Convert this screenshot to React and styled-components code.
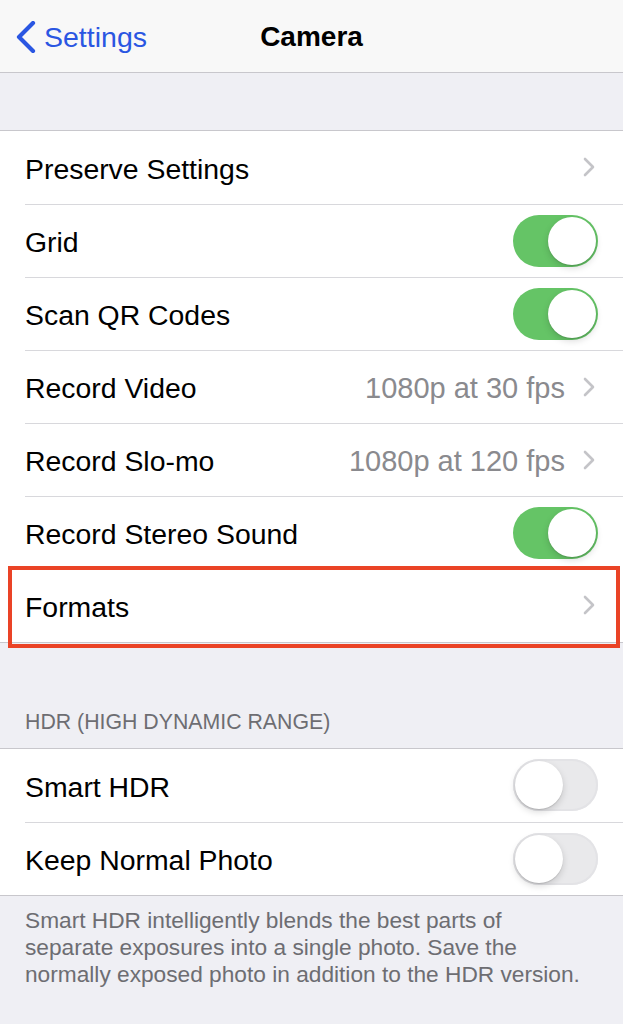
import React from "react";
import styled, { createGlobalStyle } from "styled-components";

const GlobalStyle = createGlobalStyle`
  html, body {
    margin: 0;
    padding: 0;
    background: #efeff4;
  }
  body {
    font-family: "Liberation Sans", Arial, sans-serif;
    -webkit-font-smoothing: antialiased;
  }
`;

const Page = styled.div`
  width: 623px;
  min-height: 1024px;
  background: #efeff4;
  overflow: hidden;
`;

const NavBar = styled.div`
  height: 73px;
  box-sizing: border-box;
  background: #f8f8f8;
  border-bottom: 1px solid #c8c7cc;
  display: grid;
  grid-template-columns: 1fr auto 1fr;
  align-items: center;
  padding-top: 2px;
`;

const BackButton = styled.div`
  display: flex;
  align-items: center;
  gap: 8px;
  padding-left: 15px;
  color: #2a56e2;
  font-size: 28.5px;
`;

const Title = styled.div`
  font-size: 28px;
  font-weight: 700;
  color: #000;
`;

const Spacer = styled.div`
  height: ${(p) => p.h}px;
`;

const SectionHeader = styled.div`
  height: 105px;
  box-sizing: border-box;
  display: flex;
  align-items: flex-end;
  padding: 0 25px 13px;
  font-size: 21.3px;
  color: #6d6d72;
`;

const Group = styled.div`
  background: #fff;
  border-top: 1px solid #c8c7cc;
  border-bottom: 1px solid #c8c7cc;
`;

const Row = styled.div`
  position: relative;
  height: 73px;
  display: flex;
  align-items: center;
  padding-left: 25px;

  & + & > div:first-child {
    border-top: 1px solid #d8d8dc;
  }

  ${(p) =>
    p.highlight &&
    `
    &::after {
      content: "";
      position: absolute;
      top: -3px;
      bottom: -6px;
      left: 8px;
      right: 3px;
      border: 4px solid #ea4326;
      pointer-events: none;
      z-index: 2;
    }
  `}
`;

const RowInner = styled.div`
  flex: 1;
  height: 100%;
  box-sizing: border-box;
  display: flex;
  align-items: center;
  justify-content: space-between;
  padding-right: 25px;
  margin-top: -1px;
`;

const Label = styled.span`
  font-size: 28.4px;
  color: #000;
  padding-top: 4px;
`;

const Detail = styled.div`
  display: flex;
  align-items: center;
  gap: 18px;
  padding-right: 3px;
`;

const Value = styled.span`
  font-size: 29px;
  color: #8a8a8e;
  padding-top: 4px;
`;

const Track = styled.div`
  width: 85px;
  height: 52px;
  box-sizing: border-box;
  border-radius: 26px;
  position: relative;
  background: ${(p) => (p.on ? "#65c466" : "#e9e9eb")};
  box-shadow: ${(p) => (p.on ? "none" : "inset 0 0 0 2px #e3e3e6")};
`;

const Knob = styled.div`
  position: absolute;
  top: 2px;
  left: ${(p) => (p.on ? "35px" : "2px")};
  width: 48px;
  height: 48px;
  border-radius: 50%;
  background: #fff;
  box-shadow: 0 3px 7px rgba(0, 0, 0, 0.15), 0 1px 1px rgba(0, 0, 0, 0.12);
`;

const Footer = styled.div`
  padding: 11px 36px 0 25px;
  font-size: 22.7px;
  line-height: 27px;
  color: #6d6d72;
`;

const BackChevron = () => (
  <svg width="21" height="32" viewBox="0 0 21 32">
    <polyline
      points="18,2 4,16 18,30"
      fill="none"
      stroke="#2a56e2"
      strokeWidth="4.2"
      strokeLinecap="round"
      strokeLinejoin="round"
    />
  </svg>
);

const Chevron = () => (
  <svg width="12" height="20" viewBox="0 0 12 20">
    <polyline
      points="2,2 10,10 2,18"
      fill="none"
      stroke="#c4c4c8"
      strokeWidth="2.6"
      strokeLinecap="round"
      strokeLinejoin="round"
    />
  </svg>
);

const Toggle = ({ on }) => (
  <Track on={on ? 1 : 0}>
    <Knob on={on ? 1 : 0} />
  </Track>
);

const SettingRow = ({ label, value, toggle, highlight }) => (
  <Row highlight={highlight}>
    <RowInner>
      <Label>{label}</Label>
      {toggle !== undefined ? (
        <Toggle on={toggle} />
      ) : (
        <Detail>
          {value && <Value>{value}</Value>}
          <Chevron />
        </Detail>
      )}
    </RowInner>
  </Row>
);

const cameraRows = [
  { label: "Preserve Settings" },
  { label: "Grid", toggle: true },
  { label: "Scan QR Codes", toggle: true },
  { label: "Record Video", value: "1080p at 30 fps" },
  { label: "Record Slo-mo", value: "1080p at 120 fps" },
  { label: "Record Stereo Sound", toggle: true },
  { label: "Formats", highlight: true },
];

const hdrRows = [
  { label: "Smart HDR", toggle: false },
  { label: "Keep Normal Photo", toggle: false },
];

export default function App() {
  return (
    <>
      <GlobalStyle />
      <Page>
        <NavBar>
          <BackButton>
            <BackChevron />
            Settings
          </BackButton>
          <Title>Camera</Title>
          <div />
        </NavBar>
        <Spacer h={57} />
        <Group>
          {cameraRows.map((r) => (
            <SettingRow key={r.label} {...r} />
          ))}
        </Group>
        <SectionHeader>HDR (HIGH DYNAMIC RANGE)</SectionHeader>
        <Group>
          {hdrRows.map((r) => (
            <SettingRow key={r.label} {...r} />
          ))}
        </Group>
        <Footer>
          Smart HDR intelligently blends the best parts of separate exposures
          into a single photo. Save the normally exposed photo in addition to
          the HDR version.
        </Footer>
      </Page>
    </>
  );
}
